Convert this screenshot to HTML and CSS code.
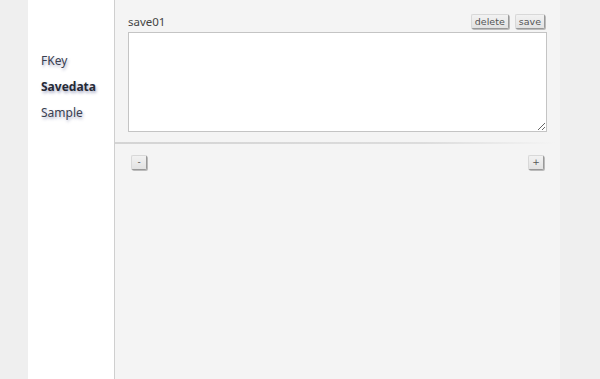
FILE: index.html
```html
<!DOCTYPE html>
<html>
<head>
    <meta charset="UTF-8">
    <title>Savedata</title>
    <link rel="stylesheet" href="styles.css">
</head>
<body>
    <div class="wrap">
        <div class="side">
            <ul class="menu">
                <li>FKey</li>
                <li class="current">Savedata</li>
                <li>Sample</li>
            </ul>
        </div>
        <div class="main">
            <div class="entry">
                <div class="entry-head">
                    <span class="entry-name">save01</span>
                    <div class="entry-btns">
                        <button class="btn">delete</button>
                        <button class="btn">save</button>
                    </div>
                </div>
                <textarea class="entry-text"></textarea>
            </div>
            <hr class="sep">
            <div class="pager">
                <button class="btn small">-</button>
                <button class="btn small">+</button>
            </div>
        </div>
    </div>
</body>
</html>
```

FILE: styles.css
```css
html, body {
    height: 100%;
}

body {
    margin: 0;
    background: #efefef;
    font-family: 'Noto Sans', 'DejaVu Sans', sans-serif;
    color: #333;
}

.wrap {
    display: flex;
    height: 100%;
    margin-left: 28px;
    width: 532px;
}

.side {
    width: 86px;
    background: #fff;
    border-right: 1px solid #cfcfcf;
}

.menu {
    list-style: none;
    margin: 0;
    padding: 48px 0 0 13px;
}

.menu li {
    font-size: 12px;
    line-height: 26px;
    color: #3a4050;
    text-shadow: 1px 2px 3px rgba(50, 60, 120, 0.4);
}

.menu li.current {
    font-weight: bold;
    color: #262a36;
}

.main {
    flex: 1;
    background: #f4f4f4;
    padding: 0 0 0 13px;
}

.entry {
    width: 419px;
    padding-top: 11px;
}

.entry-head {
    display: flex;
    justify-content: space-between;
    align-items: center;
    height: 20px;
}

.entry-name {
    font-size: 11.5px;
    color: #444;
}

.entry-btns {
    display: flex;
    gap: 6px;
    margin-right: 2px;
}

.btn {
    font-family: 'DejaVu Sans', sans-serif;
    font-size: 9.5px;
    color: #555;
    background: linear-gradient(#f2f2f2, #e2e2e2);
    border: 1px solid #d8d8d8;
    border-right-color: #999;
    border-bottom-color: #999;
    border-radius: 2px;
    padding: 1px 3px;
    height: 15px;
    line-height: 11px;
    box-shadow: 1px 1px 0 #bbb;
}

.entry-text {
    display: block;
    box-sizing: border-box;
    width: 419px;
    height: 100px;
    margin-top: 1px;
    border: 1px solid #c4c4c4;
    background: #fff;
    resize: vertical;
}

.sep {
    border: none;
    height: 2px;
    margin: 10px 0 0 -13px;
    width: 440px;
    background: linear-gradient(to right, #d4d4d4, #dcdcdc 70%, rgba(220, 220, 220, 0));
}

.pager {
    display: flex;
    justify-content: space-between;
    width: 413px;
    padding: 11px 0 0 3px;
}

.btn.small {
    width: 16px;
    padding: 0;
    font-size: 9px;
}
```
